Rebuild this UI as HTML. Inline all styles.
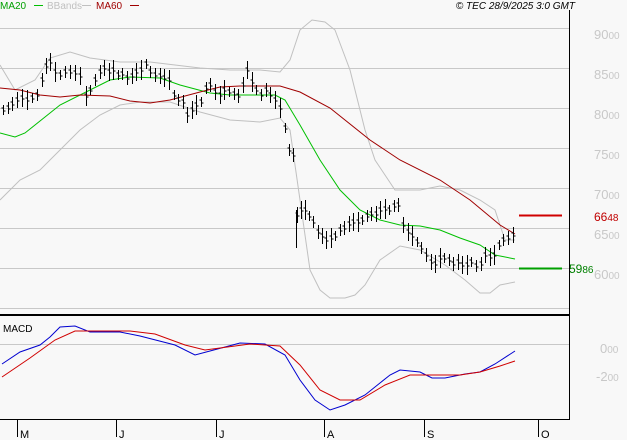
<!DOCTYPE html><html><head><style>body{margin:0;background:#f8f8f8}svg{display:block;font-family:"Liberation Sans",sans-serif}</style></head><body>
<svg width="627" height="440" viewBox="0 0 627 440" xmlns="http://www.w3.org/2000/svg">
<rect width="627" height="440" fill="#f8f8f8"/>
<g stroke="#c8c8c8" stroke-width="1">
<line x1="0" y1="28.5" x2="569" y2="28.5"/><line x1="0" y1="68.5" x2="569" y2="68.5"/><line x1="0" y1="108.5" x2="569" y2="108.5"/><line x1="0" y1="148.5" x2="569" y2="148.5"/><line x1="0" y1="188.5" x2="569" y2="188.5"/><line x1="0" y1="228.5" x2="569" y2="228.5"/><line x1="0" y1="268.5" x2="569" y2="268.5"/><line x1="0" y1="308.5" x2="569" y2="308.5"/><line x1="0" y1="344.5" x2="569" y2="344.5"/>
</g>
<g fill="#c8c8c8" font-size="13"><text x="594" y="39">90<tspan font-size="10">00</tspan></text><text x="594" y="79">85<tspan font-size="10">00</tspan></text><text x="594" y="119">80<tspan font-size="10">00</tspan></text><text x="594" y="159">75<tspan font-size="10">00</tspan></text><text x="594" y="199">70<tspan font-size="10">00</tspan></text><text x="594" y="239">65<tspan font-size="10">00</tspan></text><text x="594" y="279">60<tspan font-size="10">00</tspan></text><text x="600" y="353">0<tspan font-size="10">00</tspan></text><text x="596" y="381">-2<tspan font-size="10">00</tspan></text></g>
<g fill="none" stroke="#c0c0c0" stroke-width="1">
<polyline points="0,65 15,90 35,80 50,58 70,52 90,58 120,62 150,62 175,65 200,68 230,70 260,70 280,72 290,60 300,30 312,20 325,22 335,30 350,70 365,130 375,160 395,190 420,190 440,186 460,190 480,200 495,210 505,240 515,240"/>
<polyline points="0,200 20,180 40,170 60,150 80,130 100,115 120,105 140,102 170,102 200,112 230,120 260,122 280,118 290,130 300,200 310,270 320,290 330,298 345,298 355,295 365,285 380,260 400,246 420,250 445,265 465,280 480,293 490,293 500,285 515,282"/>
</g>
<polyline fill="none" stroke="#00c000" stroke-width="1" points="0,133 15,137 25,133 60,105 90,90 110,80 130,77 160,78 180,85 210,93 230,95 260,95 275,95 285,100 300,125 320,160 340,190 360,210 380,220 400,225 420,226 440,230 460,238 480,245 495,255 515,259"/>
<polyline fill="none" stroke="#a00000" stroke-width="1" points="0,88 20,90 40,95 60,97 80,95 110,96 130,101 150,103 170,100 200,92 220,87 240,86 280,86 300,92 330,108 370,140 400,160 440,180 470,200 500,225 515,234"/>
<g id="bars" stroke="#000" stroke-width="1"></g>
<line x1="519" y1="215.5" x2="562" y2="215.5" stroke="#d00000" stroke-width="2"/>
<line x1="519" y1="268.5" x2="562" y2="268.5" stroke="#00a000" stroke-width="2"/>
<text x="594" y="221" fill="#c00000" font-size="12">66<tspan font-size="10">48</tspan></text>
<text x="569" y="273" fill="#008000" font-size="12">59<tspan font-size="10">86</tspan></text>
<line x1="0" y1="315" x2="569" y2="315" stroke="#000" stroke-width="2"/>
<line x1="569.5" y1="10" x2="569.5" y2="419" stroke="#000"/>
<line x1="0" y1="419.5" x2="570" y2="419.5" stroke="#000"/>
<text x="3" y="332" font-size="10" fill="#000">MACD</text>
<polyline fill="none" stroke="#0000d0" stroke-width="1" points="2,364 20,352 40,345 50,337 60,327 75,326 90,332 120,332 140,336 175,345 195,355 210,351 240,343 265,344 285,355 300,380 315,400 330,410 345,405 365,395 390,375 400,370 420,372 432,378 445,378 465,374 480,372 495,364 515,351"/>
<polyline fill="none" stroke="#d00000" stroke-width="1" points="2,377 30,358 55,340 75,331 130,331 155,334 185,345 205,350 250,344 280,346 300,365 320,390 340,400 360,400 385,385 410,375 430,375 460,375 480,372 500,366 515,361"/>
<g stroke="#000"><line x1="17.5" y1="419" x2="17.5" y2="437"/><line x1="116.5" y1="419" x2="116.5" y2="437"/><line x1="216.5" y1="419" x2="216.5" y2="437"/><line x1="324.5" y1="419" x2="324.5" y2="437"/><line x1="424.5" y1="419" x2="424.5" y2="437"/><line x1="538.5" y1="419" x2="538.5" y2="437"/></g>
<g font-size="11" fill="#000"><text x="20" y="438">M</text><text x="119" y="438">J</text><text x="219" y="438">J</text><text x="327" y="438">A</text><text x="427" y="438">S</text><text x="541" y="438">O</text></g>
<g font-size="10"><text x="0" y="9" fill="#00a000">MA20</text><line x1="34" y1="5.5" x2="43" y2="5.5" stroke="#00c000"/><text x="47" y="9" fill="#c0c0c0">BBands</text><line x1="82" y1="5.5" x2="91" y2="5.5" stroke="#c0c0c0"/><text x="96" y="9" fill="#a00000">MA60</text><line x1="130" y1="5.5" x2="139" y2="5.5" stroke="#a00000"/><text x="575" y="9" text-anchor="end" font-style="italic" fill="#000">© TEC 28/9/2025 3:0 GMT</text></g>
</svg>
<script>
var p=[[3,110],[8,108],[12,104],[17,100],[22,98],[27,100],[32,98],[37,95],[42,80],[46,66],[50,62],[55,72],[60,75],[65,72],[70,72],[75,73],[80,76],[86,96],[90,90],[95,80],[100,72],[104,68],[109,72],[113,70],[118,75],[122,74],[127,78],[132,76],[136,72],[141,70],[146,64],[150,72],[155,75],[160,76],[164,78],[169,80],[174,95],[178,100],[183,102],[187,115],[192,110],[196,105],[201,102],[206,88],[210,85],[215,92],[220,95],[224,90],[229,92],[234,94],[238,96],[243,85],[247,70],[252,82],[256,90],[261,95],[266,90],[270,95],[275,100],[280,108],[285,128],[289,150],[293,155],[297,215],[301,210],[305,210],[309,216],[313,222],[318,232],[322,236],[326,240],[331,238],[335,236],[340,230],[344,228],[349,224],[353,222],[358,222],[362,220],[367,216],[371,214],[376,214],[380,210],[385,209],[389,210],[394,206],[398,205],[403,225],[408,232],[412,236],[417,242],[421,248],[426,255],[431,262],[435,264],[440,258],[444,258],[449,260],[453,264],[458,262],[462,265],[467,265],[471,262],[476,266],[481,264],[485,255],[490,257],[494,255],[499,245],[503,240],[508,238],[513,235]];
var g=document.getElementById('bars'),s='';
p.forEach(function(a,i){var x=a[0]+.5,y=a[1],h=5+(i*7%6);s+='<line x1="'+x+'" y1="'+(y-h)+'" x2="'+x+'" y2="'+(y+h)+'"/><line x1="'+(x-2)+'" y1="'+(y-2)+'" x2="'+x+'" y2="'+(y-2)+'"/><line x1="'+x+'" y1="'+(y+1)+'" x2="'+(x+2)+'" y2="'+(y+1)+'"/>';});
s+='<line x1="296.5" y1="210" x2="296.5" y2="248"/>';
g.innerHTML=s;
</script>
</body></html>
